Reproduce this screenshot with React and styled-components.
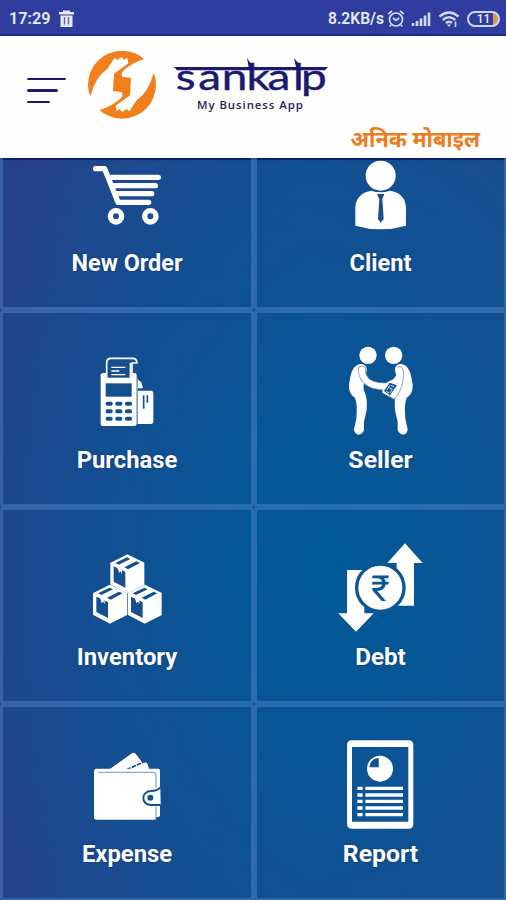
import React from "react";
import styled, { createGlobalStyle } from "styled-components";

const NAVY = "#1b1a70";
const BLUE = "#14508f";

const GlobalStyle = createGlobalStyle`
  * { box-sizing: border-box; }
  body { margin: 0; background: #fff; font-family: Roboto, "Noto Sans", sans-serif; }
`;

const Screen = styled.div`
  width: 506px;
  height: 900px;
  display: flex;
  flex-direction: column;
  overflow: hidden;
`;

const StatusBar = styled.div`
  flex: none;
  height: 36px;
  padding: 3px 6px 0 9px;
  display: flex;
  align-items: center;
  background: #2f3d9f;
  border-bottom: 2px solid #1f2588;
  color: #e6eafa;
  font-size: 17px;
  font-weight: 600;
`;

const Clock = styled.span`
  width: 49px;
  font-size: 16.2px;
`;

const StatusRight = styled.div`
  margin-left: auto;
  display: flex;
  align-items: center;
`;

const Speed = styled.span`
  width: 57px;
  font-size: 15.6px;
  white-space: nowrap;
`;

const Header = styled.header`
  flex: none;
  height: 122px;
  display: flex;
  flex-direction: column;
  background: #fefefe;
`;

const BrandRow = styled.div`
  height: 87px;
  display: flex;
  padding-left: 27px;
`;

const MenuButton = styled.button`
  width: 40px;
  height: 26px;
  margin: 42px 20px 0 0;
  padding: 0;
  border: 0;
  background: none;
  display: flex;
  flex-direction: column;
  gap: 9px;
`;

const MenuLine = styled.span`
  width: ${(p) => p.$width}px;
  height: 2.4px;
  border-radius: 2px;
  background: ${NAVY};
`;

const Mark = styled.svg`
  flex: none;
  width: 70px;
  height: 70px;
  margin-top: 14px;
`;

const Wordmark = styled.div`
  width: 154px;
  margin: 17px 0 0 17px;
  display: flex;
  flex-direction: column;
`;

const Name = styled.svg`
  display: block;
  flex: none;
  width: 154px;
  height: 50px;
`;

const NameText = styled.text`
  font: 400 37px Lato, sans-serif;
  stroke: ${NAVY};
  stroke-width: 0.4px;
`;

const Tagline = styled.div`
  margin: -5px 0 0 23px;
  font: 600 11.4px/13px "Open Sans", sans-serif;
  letter-spacing: 0.95px;
  color: #24205e;
  white-space: nowrap;
`;

const ShopName = styled.div`
  align-self: flex-end;
  margin-right: 26px;
  font: 700 21.7px/32px "Noto Sans", "Noto Sans Devanagari", sans-serif;
  color: #ec7c1c;
  white-space: nowrap;
`;

const Board = styled.main`
  flex: 1;
  min-height: 0;
  overflow: hidden;
  background:
    radial-gradient(ellipse 420px 540px at 330px 410px, #005a99 0%, #07579600 100%),
    linear-gradient(90deg, #27408a 0%, #22468d 16%, #184c90 60%, #1c4b8e 100%);
  box-shadow: inset 0 2px 1px #071f6c;
`;

const Grid = styled.div`
  margin-top: -45px;
  display: grid;
  grid-template-columns: 254px 253px;
  grid-auto-rows: 197px;
`;

const Tile = styled.button`
  border: 3px solid rgba(82, 133, 200, 0.48);
  border-radius: 3px;
  background: none;
  padding: 32px 0 0;
  display: flex;
  flex-direction: column;
  align-items: center;
  color: #fff;
`;

const TileIcon = styled.svg`
  flex: none;
  width: 90px;
  height: 90px;
`;

const Label = styled.span`
  margin-top: 10px;
  font: 700 ${(p) => p.$size}px/30px Roboto, sans-serif;
  white-space: nowrap;
  text-shadow: 0 0 2px #0b2f75;
`;

function CartIcon() {
  return (
    <TileIcon viewBox="66 -21 270 270" fill="none" stroke="#fff" strokeWidth="16" strokeLinecap="round" strokeLinejoin="round">
      <path d="M107 41H134L174 142H266M151 67H295M160 92H286M168 116H275" />
      <circle cx="168" cy="184" r="17" />
      <circle cx="271" cy="184" r="17" />
    </TileIcon>
  );
}

function ClientIcon() {
  return (
    <TileIcon viewBox="47 -21 270 270" fill="#fff">
      <circle cx="181" cy="62" r="45" />
      <path d="M105 212V158C106 128 126 111 153 107Q181 117 209 107C237 111 256 128 257 158V212Q181 234 105 212Z" />
      <path d="M170 117H192L186 132L190 192L181 203L173 192L177 132Z" fill={BLUE} />
    </TileIcon>
  );
}

function TerminalIcon() {
  const cols = [107, 136, 165];
  const rows = [170, 193, 215];
  return (
    <TileIcon viewBox="36 0 270 270" fill="#fff">
      <path d="M100 84H193Q200 84 200 91V236Q200 243 193 243H100Q92 243 92 236V91Q92 84 100 84Z" />
      <path d="M110 101V53Q110 40 123 40H188Q200 40 201 54H186V101Z" fill={BLUE} stroke="#fff" strokeWidth="5" />
      <path d="M181 54V101M124 67H166M124 78H148M124 89H166" stroke="#fff" strokeWidth="4" />
      <rect x="107" y="115" width="78" height="40" fill={BLUE} />
      {rows.map((y) => cols.map((x) => <rect key={`${x}-${y}`} x={x} y={y} width="21" height="12" rx="5" fill={BLUE} />))}
      <path d="M204 104L214 112L219 130H204Z" />
      <path d="M204 137H243Q250 137 250 146V229Q250 237 242 237H204Z" />
      <path d="M221 151V191M232 151V173" stroke={BLUE} strokeWidth="5" />
      <path d="M202 100V237" stroke="#8da9cb" strokeWidth="3" />
    </TileIcon>
  );
}

function HandshakeIcon() {
  const body = "M119 87C132 86 140 96 138 107L134 122C132 137 127 152 129 166C140 186 139 203 138 226L130 260V286Q124 299 113 299Q101 298 100 283L107 251Q111 209 103 188C85 176 82 159 87 137C91 111 98 90 119 87Z";
  return (
    <TileIcon viewBox="46 30 270 270" fill="#fff">
      <circle cx="142" cy="61" r="26" />
      <circle cx="219" cy="61" r="26" />
      <path d={body} />
      <path d={body} transform="translate(361 0) scale(-1 1)" />
      <path d="M124 104C124 137 150 153 187 154" fill="none" stroke="#718fac" strokeWidth="23" strokeLinecap="round" />
      <path d="M124 104C124 137 150 153 187 154" fill="none" stroke="#fff" strokeWidth="19" strokeLinecap="round" />
      <path d="M235 110L218 133L187 148L185 173L221 193C238 176 247 147 250 113" />
      <path d="M232 95C252 91 249 119 247 136C243 162 231 183 220 193" fill="none" stroke="#718fac" strokeWidth="2.5" />
      <path d="M207 143L229 151L208 181L190 168Z" fill={BLUE} />
      <path d="M210 151L220 155M206 158L215 162L208 174M199 165L207 151M196 169L205 173" stroke="#fff" strokeWidth="2.5" fill="none" />
    </TileIcon>
  );
}

function Box({ x, y }) {
  return (
    <g transform={`translate(${x} ${y})`}>
      <path d="M49 0L98 24V88L49 113L0 87V25Z" fill="#fff" stroke="#fff" strokeWidth="4" strokeLinejoin="round" />
      <path d="M8 34L19 39L22 46L28 43L43 51V98L8 80Z" fill={BLUE} />
      <path d="M13 24L48 7L58 12L23 29ZM40 37L76 19L87 24L51 43Z" fill={BLUE} />
      <path d="M23 40V54L29 49L33 57V46" fill="#fff" />
    </g>
  );
}

function BoxesIcon() {
  return (
    <TileIcon viewBox="36 6 270 270">
      <Box x={123} y={45} />
      <Box x={71} y={136} />
      <Box x={175} y={136} />
    </TileIcon>
  );
}

const Rupee = styled.text`
  font: 400 108px Roboto, "Noto Sans", sans-serif;
  text-anchor: middle;
`;

function DebtIcon() {
  return (
    <TileIcon viewBox="32 21 270 270" fill="#fff">
      <path d="M239 25L292 84H266V212H214V84H186Z" />
      <path d="M92 290L145 235H117V105H65V235H39Z" />
      <circle cx="165" cy="158" r="71" stroke="#0b5796" strokeWidth="10" />
      <Rupee x="165" y="198" fill="#0b5796">₹</Rupee>
    </TileIcon>
  );
}

function WalletIcon() {
  return (
    <TileIcon viewBox="36 12 270 270" fill="#fff">
      <path d="M106 112L184 56Q191 50 197 56L218 84L224 83Q231 82 233 88L240 112Z" />
      <path d="M154 111L219 82" stroke={BLUE} strokeWidth="5" strokeDasharray="14 3" />
      <path d="M79 101H264Q270 101 270 108V241Q270 247 257 247V254H80Q72 254 72 246V109Q72 101 79 101Z" />
      <path d="M85 112H251Q258 113 258 121V157M258 215V247" fill="none" stroke="#8da9cb" strokeWidth="4" />
      <path d="M271 158Q261 168 244 168C213 168 211 209 244 210H272" fill="#fff" stroke={BLUE} strokeWidth="6" />
      <circle cx="241" cy="188" r="9" fill={BLUE} />
    </TileIcon>
  );
}

function ReportIcon() {
  return (
    <TileIcon viewBox="48 27 270 270" fill="#fff">
      <path fillRule="evenodd" d="M96 31H265Q280 31 280 46V281Q280 296 265 296H96Q81 296 81 281V46Q81 31 96 31ZM96 51V275H265V51Z" />
      <circle cx="180" cy="116" r="39" />
      <path d="M176 112V84Q151 86 148 112Z" fill={BLUE} />
      {[175, 195, 214, 234, 254].map((y) => (
        <path key={y} d={`M112 ${y}H128M136 ${y}H249`} stroke="#fff" strokeWidth="10" />
      ))}
    </TileIcon>
  );
}

const tiles = [
  ["New Order", CartIcon, 23.4],
  ["Client", ClientIcon, 23.6],
  ["Purchase", TerminalIcon, 23.8],
  ["Seller", HandshakeIcon, 24.8],
  ["Inventory", BoxesIcon, 23.8],
  ["Debt", DebtIcon, 24.2],
  ["Expense", WalletIcon, 23.8],
  ["Report", ReportIcon, 24.8],
];

const StatusIcon = styled.svg`
  flex: none;
  width: ${(p) => p.$w}px;
  height: 20px;
  margin-left: ${(p) => p.$gap || 0}px;
`;

const Battery = styled.div`
  width: 33px;
  height: 16px;
  margin-left: 7px;
  border: 2px solid #cfd5f3;
  border-radius: 8px;
  display: flex;
  align-items: center;
  justify-content: center;
  font: 500 12px/12px Roboto, sans-serif;
  background: linear-gradient(90deg, transparent 82%, #d99a4d 82%);
`;

const HAND = "M262 286L271 286Q277 262 291 238Q302 220 321 206L343 173L351 180L364 171L372 180L381 173L384 190L341 221L338 273L364 277Q370 286 360 296Q332 320 298 330L255 350Z";

export default function App() {
  return (
    <Screen>
      <GlobalStyle />
      <StatusBar>
        <Clock>17:29</Clock>
        <StatusIcon $w={17} viewBox="0 0 17 20" fill="#e6eafa">
          <path d="M1 3H5V1.5H12V3H16V5.5H1ZM2.5 6.5H14.5V18H2.5Z" />
          <path d="M6.5 8V15.5M10.5 8V15.5" stroke="#5c68b6" strokeWidth="1.4" />
        </StatusIcon>
        <StatusRight>
          <Speed>8.2KB/s</Speed>
          <StatusIcon $w={18} $gap={2} viewBox="0 0 18 20" fill="none" stroke="#d4daf5" strokeWidth="1.7">
            <circle cx="9" cy="10.5" r="6.5" />
            <path d="M1.3 5L5 2M16.7 5L13 2M6 9L9 11.5L12.2 9M4 16L2.7 17.5M14 16L15.3 17.5" />
          </StatusIcon>
          <StatusIcon $w={21} $gap={6} viewBox="0 0 21 20" stroke="#d4daf5" strokeWidth="2.6">
            <path d="M2 17V14M6 17V12M10 17V9.5M14 17V6.5M18 17V3.5" />
          </StatusIcon>
          <StatusIcon $w={22} $gap={6} viewBox="0 0 22 20" fill="none" stroke="#d4daf5" strokeWidth="2.4">
            <path d="M1.5 7.5Q11 -.5 20.5 7.5M4.8 11Q11 5.5 17.2 11M8 14Q11 11.5 14 14" />
            <path d="M9 15.5H13L11 18Z" fill="#d4daf5" stroke="none" />
            <path d="M17.5 12.5V18" strokeWidth="1.6" />
          </StatusIcon>
          <Battery>11</Battery>
        </StatusRight>
      </StatusBar>
      <Header>
        <BrandRow>
          <MenuButton aria-label="Menu">
            <MenuLine $width={39} />
            <MenuLine $width={31} />
            <MenuLine $width={23} />
          </MenuButton>
          <Mark viewBox="260 150 210 210">
            <circle cx="365" cy="254" r="102" fill="#f07f1c" />
            <g fill="#fefefe">
              <path d={HAND} />
              <path d={HAND} transform="rotate(180 365 253.5)" />
            </g>
          </Mark>
          <Wordmark>
            <Name viewBox="0 -4 154 50" fill={NAVY}>
              <NameText x="1.5 19.5 38.5 58.5 75.5 96 102.5" y="33" transform="scale(1.24 1)">sankalp</NameText>
              <path d="M0 10H154L151 13.2H3Z" />
              <path d="M73 1L77 7V12H75ZM120 1L125 7V12H122.5Z" />
            </Name>
            <Tagline>My Business App</Tagline>
          </Wordmark>
        </BrandRow>
        <ShopName>अनिक मोबाइल</ShopName>
      </Header>
      <Board>
        <Grid>
          {tiles.map(([label, Icon, size]) => (
            <Tile key={label}>
              <Icon />
              <Label $size={size}>{label}</Label>
            </Tile>
          ))}
        </Grid>
      </Board>
    </Screen>
  );
}
